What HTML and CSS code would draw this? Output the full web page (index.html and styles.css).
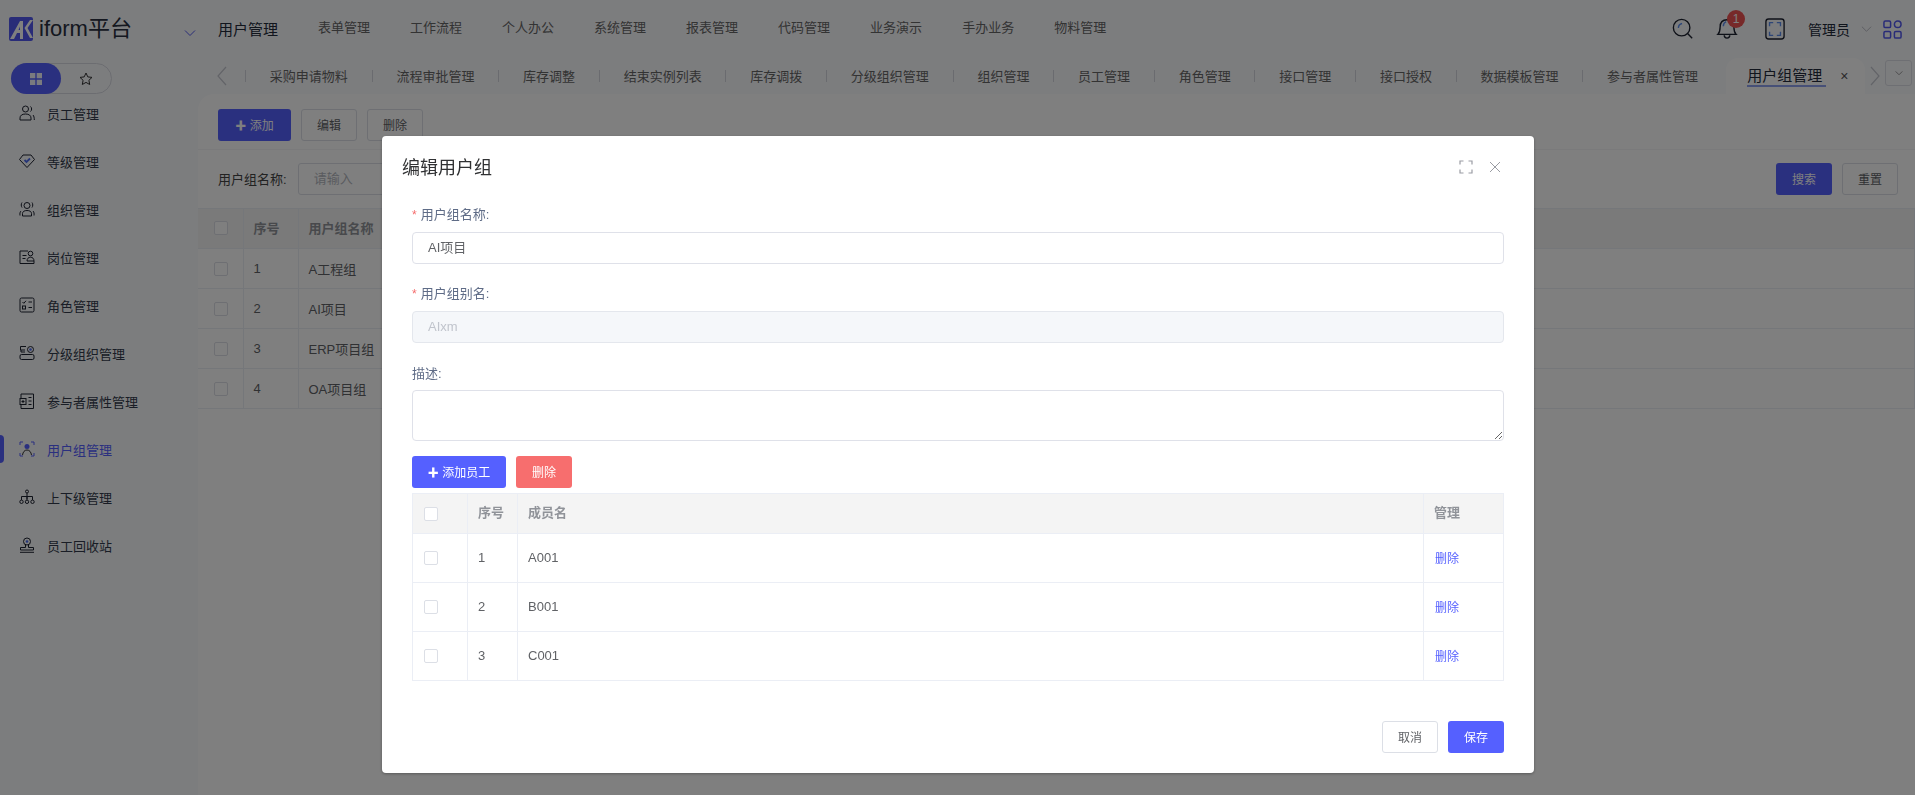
FILE: index.html
```html
<!DOCTYPE html>
<html lang="zh-CN">
<head>
<meta charset="utf-8">
<title>iform平台</title>
<link rel="stylesheet" href="styles.css">
</head>
<body>
<div class="page">
  <header class="topbar">
    <div class="brand">
      <svg class="logo" viewBox="0 0 24 24"><rect width="24" height="24" rx="2" fill="#5359f0"/><path d="M1 22 11 4h3v18h-3v-6H8l-3 6z" fill="#fff"/><path d="M9.500 13H11V9.500z" fill="#5359f0"/><path d="M15.500 11 21 3h3l-5.500 8L24 21h-3z" fill="#fff"/></svg>
      <span class="brand-name">iform平台</span>
    </div>
    <svg class="brand-chev" viewBox="0 0 12 8"><path d="M1 1.500 6 6.500 11 1.500" fill="none" stroke="#5359f0" stroke-width="1"/></svg>
    <nav class="mainnav">
      <a class="nav-item active">用户管理</a>
      <a class="nav-item">表单管理</a>
      <a class="nav-item">工作流程</a>
      <a class="nav-item">个人办公</a>
      <a class="nav-item">系统管理</a>
      <a class="nav-item">报表管理</a>
      <a class="nav-item">代码管理</a>
      <a class="nav-item">业务演示</a>
      <a class="nav-item">手办业务</a>
      <a class="nav-item">物料管理</a>
    </nav>
    <div class="top-tools">
      <svg class="tool-search" viewBox="0 0 24 24"><circle cx="10.500" cy="10.500" r="9" fill="none" stroke="#1d2230" stroke-width="1.500"/><path d="m17 17 5 5" stroke="#1d2230" stroke-width="1.500"/><path d="M7 11c0-3 1.500-4.500 4-5" fill="none" stroke="#5b8def" stroke-width="1.500"/></svg>
      <span class="tool-bell">
        <svg viewBox="0 0 24 26"><path d="M2 20c2-2 2.500-3 2.500-8 0-5 3-8 7.500-8s7.500 3 7.500 8c0 5 .5 6 2.500 8z" fill="none" stroke="#1d2230" stroke-width="1.500"/><path d="M9 21a3 3 0 0 0 6 0" fill="none" stroke="#1d2230" stroke-width="1.500"/><path d="M8 11c0-2 1-4 3-5" fill="none" stroke="#5b8def" stroke-width="1.500"/></svg>
        <b class="badge">1</b>
      </span>
      <svg class="tool-full" viewBox="0 0 22 24"><rect x="1" y="1" width="20" height="22" rx="3" fill="none" stroke="#1d2230" stroke-width="1.500"/><path d="M5 9V5h4M13 5h4v4M17 15v4h-4M9 19H5v-4" fill="none" stroke="#5b8def" stroke-width="1.500"/></svg>
      <span class="user-name">管理员</span>
      <svg class="user-chev" viewBox="0 0 12 8"><path d="M1 1.500 6 6.500 11 1.500" fill="none" stroke="#b5b8c0" stroke-width="1"/></svg>
      <svg class="tool-apps" viewBox="0 0 20 20"><rect x="1" y="1" width="7" height="7" rx="1.500" fill="none" stroke="#5359f0" stroke-width="1.600"/><circle cx="15.500" cy="4.500" r="3.500" fill="none" stroke="#5359f0" stroke-width="1.600"/><rect x="1" y="12" width="7" height="7" rx="1.500" fill="none" stroke="#5359f0" stroke-width="1.600"/><rect x="12" y="12" width="7" height="7" rx="1.500" fill="none" stroke="#5359f0" stroke-width="1.600"/></svg>
    </div>
  </header>

  <div class="main">
    <aside class="sidebar">
      <div class="toggle">
        <span class="toggle-on"><svg viewBox="0 0 12 12"><path d="M0 0h5.300v5.300H0zM6.700 0H12v5.300H6.700zM0 6.700h5.300V12H0zM6.700 6.700H12V12H6.700z" fill="#f4f6ff"/></svg></span>
        <span class="toggle-off"><svg viewBox="0 0 14 14"><path d="m7 1 1.800 3.900 4.200.5-3.100 2.900.8 4.200L7 10.400l-3.700 2.100.8-4.200L1 5.400l4.200-.5z" fill="none" stroke="#333" stroke-width="1"/></svg></span>
      </div>
      <ul class="menu">
        <li class="menu-item"><svg viewBox="0 0 16 16"><circle cx="6.500" cy="4" r="3" class="ic"/><path d="M1 15v-2c0-2.500 2-4 5.500-4s5.500 1.500 5.500 4v2zM11.500 1.500c1.500 1 1.500 4 0 5M14 10c1 1 1.300 3 1.300 5" class="ic"/></svg>员工管理</li>
        <li class="menu-item"><svg viewBox="0 0 16 16"><path d="M4 2h8l3.500 4.500L8 14.500.5 6.500z" class="ic"/><path d="m5.500 7 2 2 3.500-3.500" fill="none" stroke="#4d6df0" stroke-width="1.800"/></svg>等级管理</li>
        <li class="menu-item"><svg viewBox="0 0 16 16"><circle cx="8" cy="4.500" r="3" class="ic"/><path d="M3.500 15v-2.500c0-2 2-3 4.500-3s4.500 1 4.500 3V15zM3 1.500c-1 1-1 4 0 5M13 1.500c1 1 1 4 0 5M1 14.500c-.3-2 0-3.500 1-4.500M15 14.500c.3-2 0-3.500-1-4.500" class="ic"/></svg>组织管理</li>
        <li class="menu-item"><svg viewBox="0 0 16 16"><path d="M9 2H1v12.500h14V12M3.500 6.500h4M3.500 9.500h3" class="ic"/><circle cx="11.500" cy="4.500" r="2.300" class="ic"/><path d="M8 12c0-2.500 1.500-3.800 3.500-3.800S15 9.500 15 12z" class="ic"/></svg>岗位管理</li>
        <li class="menu-item"><svg viewBox="0 0 16 16"><rect x="1" y="1" width="14" height="14" rx="1.500" class="ic"/><path d="m3.500 5 1.300 1.300L7 3.800M9.500 5H13M9.500 10.500H13" class="ic"/><rect x="3.500" y="9" width="3" height="3" class="ic"/></svg>角色管理</li>
        <li class="menu-item"><svg viewBox="0 0 16 16"><path d="M7 1.500H1.500v3.500H6M2 5v2h4" class="ic"/><circle cx="11.500" cy="4.500" r="3" class="ic"/><circle cx="11.500" cy="4.500" r="1.300" fill="#4d6df0"/><rect x="1" y="9.500" width="14" height="5" rx="1.500" class="ic"/></svg>分级组织管理</li>
        <li class="menu-item"><svg viewBox="0 0 16 16"><path d="M2 1h12.500v14.500H2v-4M2 5.500V1" class="ic"/><rect x="1" y="5.500" width="6" height="6" class="ic"/><path d="M4 7v3M2.500 8.500h3M9.500 4.500h3M9.500 8h3M9.500 11.500h3" class="ic"/></svg>参与者属性管理</li>
        <li class="menu-item current"><svg viewBox="0 0 16 16"><path d="M1 4V1h3M12 1h3v3M15 12v3h-3M4 15H1v-3" fill="none" stroke="#5560ff" stroke-width="1"/><circle cx="8" cy="5.500" r="2.500" fill="#5560ff"/><path d="M3.500 14c.5-3 2-5 4.500-5s4 2 4.500 5" fill="none" stroke="#333" stroke-width="1"/></svg>用户组管理</li>
        <li class="menu-item"><svg viewBox="0 0 16 16"><circle cx="8" cy="2.500" r="1.500" class="ic"/><path d="M8 4v6M2.500 11V7.500h11V11M8 7.500V11" class="ic"/><circle cx="2.500" cy="12.800" r="1.700" class="ic"/><circle cx="8" cy="12.800" r="1.700" class="ic"/><circle cx="13.500" cy="12.800" r="1.700" class="ic"/></svg>上下级管理</li>
        <li class="menu-item"><svg viewBox="0 0 16 16"><circle cx="8" cy="4.500" r="3.500" class="ic"/><circle cx="8" cy="4.500" r="1.300" fill="#4d6df0"/><path d="M6.500 8v2.500H1.500v2.500h13v-2.500h-5V8M1 15.300h14" class="ic"/></svg>员工回收站</li>
      </ul>
    </aside>

    <div class="workspace">
      <div class="tabs">
        <svg class="tab-arrow" viewBox="0 0 10 20"><path d="M9 1 1 10l8 9" fill="none" stroke="#c5c8d0" stroke-width="1.200"/></svg>
        <i class="tab-sep first"></i>
        <a class="tab">采购申请物料</a><i class="tab-sep"></i>
        <a class="tab">流程审批管理</a><i class="tab-sep"></i>
        <a class="tab">库存调整</a><i class="tab-sep"></i>
        <a class="tab">结束实例列表</a><i class="tab-sep"></i>
        <a class="tab">库存调拨</a><i class="tab-sep"></i>
        <a class="tab">分级组织管理</a><i class="tab-sep"></i>
        <a class="tab">组织管理</a><i class="tab-sep"></i>
        <a class="tab">员工管理</a><i class="tab-sep"></i>
        <a class="tab">角色管理</a><i class="tab-sep"></i>
        <a class="tab">接口管理</a><i class="tab-sep"></i>
        <a class="tab">接口授权</a><i class="tab-sep"></i>
        <a class="tab">数据模板管理</a><i class="tab-sep"></i>
        <a class="tab">参与者属性管理</a>
        <div class="tab-active"><span class="tab-active-label">用户组管理</span><span class="tab-close">×</span></div>
        <svg class="tab-arrow right" viewBox="0 0 10 20"><path d="m1 1 8 9-8 9" fill="none" stroke="#c5c8d0" stroke-width="1.200"/></svg>
        <span class="tab-more"><svg viewBox="0 0 12 8"><path d="M2 1.500 6 5.500 10 1.500" fill="none" stroke="#999" stroke-width="1.200"/></svg></span>
      </div>
      <section class="panel">
        <div class="toolbar">
          <button class="btn primary back-add"><b class="plus">✚</b> 添加</button>
          <button class="btn plain back-w">编辑</button>
          <button class="btn plain back-w">删除</button>
        </div>
        <div class="searchbar">
          <label class="search-label">用户组名称:</label>
          <input class="search-input" placeholder="请输入">
          <span class="search-actions">
            <button class="btn primary back-w">搜索</button>
            <button class="btn plain back-w">重置</button>
          </span>
        </div>
        <table class="grid back-grid">
          <colgroup><col class="bc1"><col class="bc2"><col class="bc3"><col></colgroup>
          <thead><tr><th><span class="check"></span></th><th>序号</th><th>用户组名称</th><th></th></tr></thead>
          <tbody>
            <tr><td><span class="check"></span></td><td>1</td><td>A工程组</td><td></td></tr>
            <tr><td><span class="check"></span></td><td>2</td><td>AI项目</td><td></td></tr>
            <tr><td><span class="check"></span></td><td>3</td><td>ERP项目组</td><td></td></tr>
            <tr><td><span class="check"></span></td><td>4</td><td>OA项目组</td><td></td></tr>
          </tbody>
        </table>
      </section>
    </div>
  </div>
</div>

<div class="overlay"></div>
<div class="dialog">
  <div class="dialog-head">
    <h2 class="dialog-title">编辑用户组</h2>
    <svg class="dlg-icon" viewBox="0 0 14 14"><path d="M1 4.500V1h3.500M9.500 1H13v3.500M13 9.500V13H9.500M4.500 13H1V9.500" fill="none" stroke="#9a9ca3" stroke-width="1.200"/></svg>
    <svg class="dlg-icon close" viewBox="0 0 14 14"><path d="m2 2 10 10M12 2 2 12" fill="none" stroke="#9a9ca3" stroke-width="1"/></svg>
  </div>
  <div class="dialog-body">
    <div class="field">
      <label class="field-label"><span class="req">*</span>用户组名称:</label>
      <input class="field-input" value="AI项目">
    </div>
    <div class="field wide">
      <label class="field-label"><span class="req">*</span>用户组别名:</label>
      <input class="field-input" value="AIxm" disabled>
    </div>
    <div class="field last">
      <label class="field-label">描述:</label>
      <textarea class="field-area"></textarea>
    </div>
    <div class="dlg-actions">
      <button class="btn primary dlg-add"><b class="plus">✚</b> 添加员工</button>
      <button class="btn danger dlg-del">删除</button>
    </div>
    <table class="grid member-grid">
      <colgroup><col class="mc1"><col class="mc2"><col><col class="mc4"></colgroup>
      <thead><tr><th><span class="check"></span></th><th>序号</th><th>成员名</th><th>管理</th></tr></thead>
      <tbody>
        <tr><td><span class="check"></span></td><td>1</td><td>A001</td><td><a class="link">删除</a></td></tr>
        <tr><td><span class="check"></span></td><td>2</td><td>B001</td><td><a class="link">删除</a></td></tr>
        <tr><td><span class="check"></span></td><td>3</td><td>C001</td><td><a class="link">删除</a></td></tr>
      </tbody>
    </table>
  </div>
  <div class="dialog-foot">
    <button class="btn plain back-w">取消</button>
    <button class="btn primary back-w">保存</button>
  </div>
</div>
</body>
</html>
```
FILE: styles.css
```css
* { box-sizing: border-box; }
html, body { margin: 0; height: 100%; overflow: hidden; }
body {
  font-family: "Liberation Sans", "Noto Sans CJK SC", sans-serif;
  font-size: 13px;
  color: #606266;
  background: #f9fafd;
}
.page { height: 795px; display: flex; flex-direction: column; }

/* top bar */
.topbar { height: 58px; flex: none; display: flex; align-items: center; padding-left: 9px; }
.brand { width: 175px; display: flex; align-items: center; gap: 6px; }
.logo { width: 24px; height: 24px; flex: none; }
.brand-name { font-size: 22px; color: #2a3040; line-height: 28px; }
.brand-chev { width: 12px; height: 8px; margin-left: 0; flex: none; position: relative; top: 4px; }
.mainnav { display: flex; align-items: center; margin-left: 22px; gap: 40px; }
.nav-item { font-size: 13px; color: #666; line-height: 18px; position: relative; top: -1px; }
.nav-item.active { font-size: 15px; color: #222a3a; top: 1px; }
.top-tools { margin-left: auto; display: flex; align-items: center; padding-right: 13px; }
.tool-search { width: 22px; height: 22px; }
.tool-bell { width: 24px; height: 26px; margin-left: 22px; position: relative; }
.tool-bell svg { width: 22px; height: 24px; display: block; }
.badge {
  position: absolute; left: 11px; top: -6px; width: 18px; height: 18px; border-radius: 50%;
  background: #ee5252; color: #fff; font-weight: 400; font-size: 12px; line-height: 18px; text-align: center;
}
.tool-full { width: 20px; height: 22px; margin-left: 25px; }
.user-name { font-size: 14px; color: #222a3a; margin-left: 23px; }
.user-chev { width: 11px; height: 8px; margin-left: 11px; }
.tool-apps { width: 19px; height: 19px; margin-left: 11px; }

/* shell */
.main { flex: 1; display: flex; min-height: 0; }
.sidebar { width: 198px; flex: none; padding-top: 5px; }
.toggle {
  width: 101px; height: 31px; margin-left: 11px; border: 1px solid #d8dae2; border-radius: 16px;
  display: flex;
}
.toggle-on {
  width: 50px; height: 31px; margin: -1px 0 0 -1px; background: #5560ff; border-radius: 16px;
  display: flex; align-items: center; justify-content: center;
}
.toggle-on svg { width: 12px; height: 12px; }
.toggle-off { flex: 1; display: flex; align-items: center; justify-content: center; }
.toggle-off svg { width: 14px; height: 14px; }
.menu { list-style: none; margin: -5px 0 0; padding: 0; }
.menu-item {
  height: 48px; display: flex; align-items: center; padding-left: 19px; gap: 12px;
  font-size: 13px; color: #333b4c; position: relative;
}
.menu-item svg { width: 16px; height: 16px; flex: none; }
.ic { fill: none; stroke: #1d2230; stroke-width: 1; }
.menu-item.current { color: #5560ff; }
.menu-item.current::before {
  content: ""; position: absolute; left: 0; top: 10px; width: 4px; height: 28px;
  background: #5560ff; border-radius: 0 4px 4px 0;
}

/* tabs */
.workspace { flex: 1; min-width: 0; display: flex; flex-direction: column; }
.tabs { height: 36px; flex: none; display: flex; align-items: center; padding-left: 19px; }
.tab-arrow { width: 10px; height: 20px; flex: none; }
.tab-arrow.right { margin-left: 5px; }
.tab-sep { width: 1px; height: 12px; background: #d5d7de; margin: 0 23.8px; flex: none; }
.tab-sep.first { margin-left: 18px; }
.tab { font-size: 13px; color: #666; white-space: nowrap; margin-bottom: 2px; }
.tab-active {
  width: 139px; height: 36px; margin-left: 28px; flex: none; background: #fff; border-radius: 12px 12px 0 0;
  display: flex; align-items: center; padding-left: 21px; font-size: 15px; color: #222a3a;
}
.tab-active-label { border-bottom: 2px solid #8ea0ef; line-height: 18px; width: 79px; position: relative; top: 1px; }
.tab-close { font-size: 14px; color: #555; margin-left: 14px; }
.tab-more {
  width: 27px; height: 26px; margin-left: 5px; border: 1px solid #dcdfe6; border-radius: 3px; position: relative; top: -3px;
  display: flex; align-items: center; justify-content: center; flex: none;
}
.tab-more svg { width: 10px; height: 7px; }

/* panel */
.panel { flex: 1; background: #fff; border-radius: 16px 0 0 0; min-height: 0; }
.toolbar { height: 56px; padding: 15px 0 0 20px; display: flex; gap: 10px; align-items: flex-start; border-bottom: 1px solid #f4f4f6; }
.btn {
  height: 32px; border-radius: 3px; border: 1px solid transparent; font: inherit; font-size: 12px;
  padding: 0 0 2px; background: none; cursor: pointer;
}
.btn.primary { background: #5560ff; color: #fff; }
.btn.plain { background: #fff; border-color: #dcdfe6; color: #606266; }
.btn.danger { background: #f76e6e; color: #fff; }
.plus { font-weight: 400; font-size: 11px; }
.back-add { width: 73px; }
.back-w { width: 56px; }
.searchbar { height: 58px; padding: 0 17px 0 20px; display: flex; align-items: center; }
.search-label { font-size: 13px; color: #444; margin-bottom: 2px; }
.search-input {
  width: 200px; height: 32px; margin-left: 11px; border: 1px solid #dcdfe6; border-radius: 3px;
  padding: 0 15px 2px; font: inherit; background: #fff;
}
.search-input::placeholder { color: #b4b7bf; }
.search-actions { margin-left: auto; display: flex; gap: 10px; }

/* tables */
.grid { border-collapse: collapse; table-layout: fixed; width: 100%; }
.grid th, .grid td { border: 1px solid #ebeef5; padding: 0 0 0 10px; text-align: left; font-size: 13px; }
.grid th { background: #f4f4f4; color: #909399; font-weight: 700; padding-bottom: 2px; }
.grid td { color: #606266; }
.check { display: block; width: 14px; height: 14px; border: 1px solid #dcdfe6; border-radius: 2px; background: #fff; }
.back-grid th { height: 40px; }
.back-grid td { height: 40px; }
.back-grid th:first-child, .back-grid td:first-child { border-left: 0; padding-left: 16px; }
.bc1 { width: 45px; }
.bc2 { width: 55px; }
.bc3 { width: 320px; }
.member-grid th { height: 40px; padding-bottom: 4px; }
.member-grid td { height: 49px; padding-bottom: 2px; }
.member-grid th:first-child, .member-grid td:first-child { padding: 0 0 0 11px; }
.mc1 { width: 55px; }
.mc2 { width: 50px; }
.mc4 { width: 80px; }
.link { color: #5560ff; font-size: 12px; margin-left: 1px; }

/* dialog */
.overlay { position: fixed; inset: 0; background: rgba(0, 0, 0, .5); }
.dialog {
  position: fixed; left: 382px; top: 136px; width: 1152px; height: 637px; background: #fff; border-radius: 4px;
  box-shadow: 0 1px 3px rgba(0, 0, 0, .3); display: flex; flex-direction: column;
}
.dialog-head { height: 70px; flex: none; display: flex; align-items: flex-start; padding: 20px 32px 0 20px; }
.dialog-title { margin: 0 auto 0 0; font-size: 18px; font-weight: 400; line-height: 24px; color: #303133; }
.dlg-icon { width: 14px; height: 14px; margin-top: 4px; }
.dlg-icon.close { margin-left: 15px; }
.dialog-body { padding: 0 30px; }
.field { margin-bottom: 21px; }
.field.wide { margin-bottom: 22px; }
.field.last { margin-bottom: 15px; }
.field-label { display: block; height: 18px; line-height: 18px; margin-bottom: 8px; font-size: 13px; color: #5f6c87; }
.field.last .field-label { margin-bottom: 7px; }
.req { color: #f56c6c; margin-right: 4px; font-size: 12px; }
.field-input {
  display: block; width: 100%; height: 32px; border: 1px solid #dfe1e9; border-radius: 4px; padding: 0 15px 4px;
  font: inherit; color: #606266; background: #fff; outline: 0;
}
.field-input:disabled { background: #f5f7fa; color: #c0c4cc; border-color: #e4e7ed; padding-bottom: 2px; }
.field-area {
  display: block; width: 100%; height: 51px; border: 1px solid #dfe1e9; border-radius: 4px; padding: 5px 15px;
  font: inherit; background: #fff; outline: 0;
}
.dlg-actions { display: flex; gap: 10px; margin-bottom: 5px; }
.dlg-add { width: 94px; }
.dlg-del { width: 56px; }
.dialog-foot { margin-top: auto; padding: 0 30px 20px 0; display: flex; justify-content: flex-end; gap: 10px; }
```
